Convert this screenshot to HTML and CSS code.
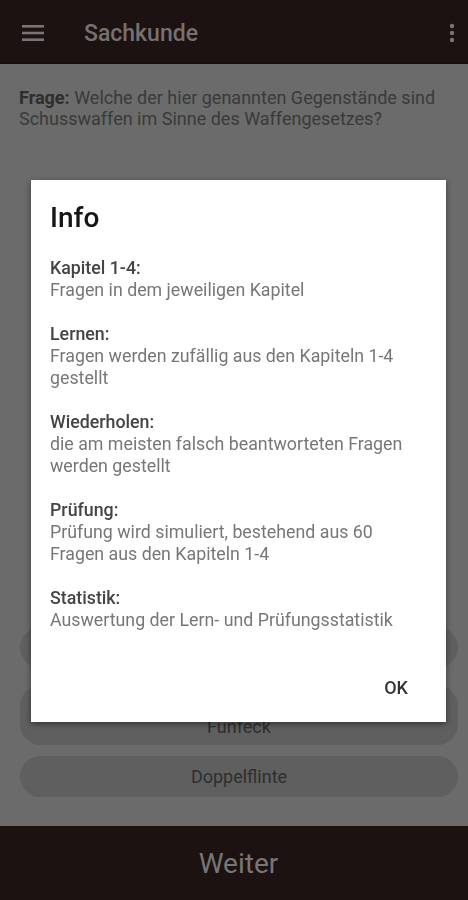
FILE: index.html
```html
<!DOCTYPE html>
<html lang="de">
<head>
<meta charset="utf-8">
<title>Sachkunde</title>
<link rel="stylesheet" href="styles.css">
</head>
<body>
<div class="page">
  <header class="appbar">
    <svg class="menu" width="22" height="18" viewBox="0 0 22 18"><rect x="0" y="1" width="22" height="2.6" fill="#7a7474"/><rect x="0" y="7.7" width="22" height="2.6" fill="#7a7474"/><rect x="0" y="14.4" width="22" height="2.6" fill="#7a7474"/></svg>
    <h1 class="title">Sachkunde</h1>
    <svg class="more" width="6" height="20" viewBox="0 0 6 20"><circle cx="3" cy="3" r="2.2" fill="#7a7474"/><circle cx="3" cy="10" r="2.2" fill="#7a7474"/><circle cx="3" cy="17" r="2.2" fill="#7a7474"/></svg>
  </header>
  <main class="content">
    <p class="question"><span class="qlabel">Frage:</span> Welche der hier genannten Gegenstände sind Schusswaffen im Sinne des Waffengesetzes?</p>
    <div class="answers">
      <div class="answer a1">Signalpistole</div>
      <div class="answer a2">Zierwaffe in der Form eines<br>Fünfeck</div>
      <div class="answer a3">Doppelflinte</div>
    </div>
  </main>
  <footer class="bottombar">Weiter</footer>
</div>
<div class="overlay">
  <div class="dialog">
    <h2 class="dtitle">Info</h2>
    <div class="section"><div class="label">Kapitel 1-4:</div><div class="text">Fragen in dem jeweiligen Kapitel</div></div>
    <div class="section"><div class="label">Lernen:</div><div class="text">Fragen werden zufällig aus den Kapiteln 1-4 gestellt</div></div>
    <div class="section"><div class="label">Wiederholen:</div><div class="text">die am meisten falsch beantworteten Fragen werden gestellt</div></div>
    <div class="section"><div class="label">Prüfung:</div><div class="text">Prüfung wird simuliert, bestehend aus 60 Fragen aus den Kapiteln 1-4</div></div>
    <div class="section last"><div class="label">Statistik:</div><div class="text">Auswertung der Lern- und Prüfungsstatistik</div></div>
    <div class="actions"><span class="ok">OK</span></div>
  </div>
</div>
</body>
</html>
```
FILE: styles.css
```css
html, body {
  margin: 0;
  padding: 0;
}
body {
  width: 468px;
  height: 900px;
  overflow: hidden;
  background: #6b6b6b;
  font-family: Roboto, "Liberation Sans", sans-serif;
}
.page {
  display: flex;
  flex-direction: column;
  height: 900px;
}
.appbar {
  height: 64px;
  flex: none;
  background: #1c1212;
  display: flex;
  align-items: center;
  padding: 0 0 0 22px;
  border-bottom: 1px solid #111;
  box-sizing: border-box;
}
.menu {
  flex: none;
  margin-top: 2px;
}
.title {
  margin: 4px 0 0 40px;
  font-size: 23px;
  font-weight: 500;
  color: #777070;
  flex: 1;
}
.more {
  flex: none;
  margin-right: 13px;
  margin-top: 2px;
}
.content {
  flex: 1;
  display: flex;
  flex-direction: column;
}
.question {
  margin: 0;
  padding: 23px 20px 0 19px;
  font-size: 18px;
  line-height: 21px;
  color: #3a3a3a;
}
.qlabel {
  font-weight: 700;
  color: #2e2e2e;
}
.answers {
  margin-top: auto;
  padding: 0 10px 29px 20px;
  display: flex;
  flex-direction: column;
}
.answer {
  background: #5f5f5f;
  border-radius: 21px;
  font-size: 18px;
  line-height: 22px;
  color: #2e2e2e;
  text-align: center;
  display: flex;
  align-items: center;
  justify-content: center;
}
.a1 { height: 41px; }
.a2 { height: 60px; margin-top: 17px; padding-top: 2px; box-sizing: border-box; }
.a3 { height: 41px; margin-top: 11px; }
.bottombar {
  height: 74px;
  flex: none;
  background: #1c1212;
  color: #7a7575;
  font-size: 28px;
  display: flex;
  align-items: center;
  justify-content: center;
  padding-left: 9px;
  box-sizing: border-box;
}
.overlay {
  position: fixed;
  inset: 0;
  padding: 180px 0 0 31px;
}
.dialog {
  width: 415px;
  height: 542px;
  box-sizing: border-box;
  background: #fff;
  padding: 22px 19px 0 19px;
  box-shadow: 0 2px 6px rgba(0,0,0,0.45);
  display: flex;
  flex-direction: column;
}
.dtitle {
  margin: 0 0 23px 0;
  font-size: 28px;
  line-height: 32px;
  font-weight: 500;
  color: #151515;
}
.section {
  font-size: 17.8px;
  line-height: 22px;
  margin-bottom: 22px;
}
.section.last {
  margin-bottom: 0;
}
.label {
  font-weight: 500;
  color: #444;
}
.text {
  color: #777;
}
.actions {
  margin-top: auto;
  display: flex;
  justify-content: flex-end;
  padding: 0 19px 23px 0;
}
.ok {
  font-size: 18px;
  line-height: 22px;
  font-weight: 500;
  color: #333;
}
```
